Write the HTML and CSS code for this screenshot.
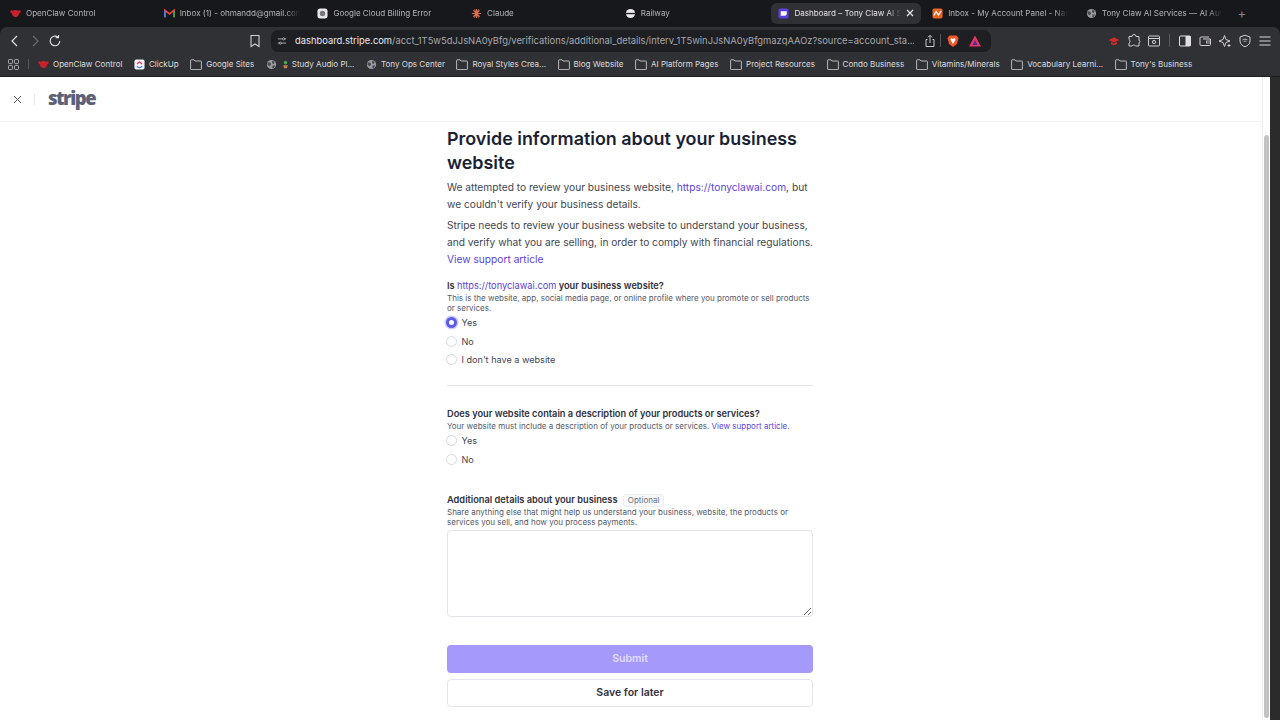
FILE: index.html
```html
<!DOCTYPE html>
<html lang="en">
<head>
    <meta charset="UTF-8">
    <meta name="viewport" content="width=device-width, initial-scale=1.0">
    <title>Dashboard - Tony Claw AI Services</title>
    <link rel="stylesheet" href="styles.css">
</head>
<body>
    <svg class="defs" width="0" height="0">
        <symbol id="folder" viewBox="0 0 12 11"><path d="M.6 2V10a.6.6 0 0 0 .6.6h9.6a.6.6 0 0 0 .6-.6V2.6a.6.6 0 0 0-.6-.6H5L4 .8H1.2A.6.6 0 0 0 .6 1.4Z" fill="none" stroke="#c8c8cc" stroke-width=".9"/></symbol>
        <symbol id="globe" viewBox="0 0 12 12"><circle cx="6" cy="6" r="5" fill="#9a9ba0"/><path d="M2 3.5l3 .5.5 2.5-2 1.5L1.500 6ZM7 1.500l2.500 1.500-1 2.500-2-1ZM7 7h3l-1.500 3H7Z" fill="#4a4b50"/></symbol>
        <symbol id="claw" viewBox="0 0 12 12"><path d="M6 2.200c2.600 0 4 1.500 4 3.500S8 10 6 10 2 7.700 2 5.700 3.400 2.200 6 2.200Z" fill="#c8232c"/><circle cx="1.800" cy="4" r="1.500" fill="#c8232c"/><circle cx="10.200" cy="4" r="1.500" fill="#c8232c"/></symbol>
    </svg>

    <!-- Tab strip -->
    <div class="tabs">
        <div class="tab"><svg class="fav"><use href="#claw"/></svg><span class="tab-title">OpenClaw Control</span></div>
        <div class="tab"><svg class="fav" viewBox="0 0 12 12"><path d="M1 10V2.500L6 6.500 11 2.500V10" fill="none" stroke="#ea4335" stroke-width="1.800"/><path d="M1 10V3" stroke="#4285f4" stroke-width="1.800"/><path d="M11 10V3" stroke="#34a853" stroke-width="1.800"/></svg><span class="tab-title">Inbox (1) - ohmandd@gmail.com</span></div>
        <div class="tab"><svg class="fav" viewBox="0 0 12 12"><rect x=".5" y=".5" width="11" height="11" rx="3" fill="#e8e8ea"/><circle cx="6" cy="6" r="3" fill="#77787c"/></svg><span class="tab-title">Google Cloud Billing Error</span></div>
        <div class="tab"><svg class="fav" viewBox="0 0 12 12"><path d="M6 1v10M1 6h10M2.500 2.500l7 7M9.500 2.500l-7 7M3.800 1.500l4.400 9M8.200 1.500l-4.400 9" stroke="#d9704f" stroke-width="1.100"/></svg><span class="tab-title">Claude</span></div>
        <div class="tab"><svg class="fav" viewBox="0 0 12 12"><circle cx="6" cy="6" r="5" fill="#ececee"/><rect x="1" y="5.300" width="10" height="1.500" fill="#222"/></svg><span class="tab-title">Railway</span></div>
        <div class="tab active"><svg class="fav" viewBox="0 0 12 12"><rect x=".5" y=".5" width="11" height="11" rx="2" fill="#5a3fe0"/><path d="M3 3.500h6.500v3.500L8 8.500H3Z" fill="#fff"/></svg><span class="tab-title">Dashboard – Tony Claw AI Services</span><svg class="tab-close" viewBox="0 0 8 8"><path d="M1 1l6 6M7 1 1 7" stroke="#e6e6e8" stroke-width="1.200"/></svg></div>
        <div class="tab"><svg class="fav" viewBox="0 0 12 12"><rect x=".5" y=".5" width="11" height="11" rx="2" fill="#e8641f"/><path d="M2 8l2.500-4 2.500 3.500L10 3.500" fill="none" stroke="#fff" stroke-width="1.300"/></svg><span class="tab-title">Inbox - My Account Panel - Namecheap</span></div>
        <div class="tab"><svg class="fav"><use href="#globe"/></svg><span class="tab-title">Tony Claw AI Services — AI Automation</span></div>
        <span class="tab-new">+</span>
    </div>

    <!-- Toolbar -->
    <div class="chrome">
        <div class="toolbar">
            <div class="nav-group">
                <svg class="tool" viewBox="0 0 14 14"><path d="M9 2 4 7l5 5" fill="none" stroke="#e4e4e6" stroke-width="1.200"/></svg>
                <svg class="tool" viewBox="0 0 14 14"><path d="M5 2l5 5-5 5" fill="none" stroke="#6a6b70" stroke-width="1.200"/></svg>
                <svg class="tool" viewBox="0 0 14 14"><path d="M11.800 7A4.800 4.800 0 1 1 10 3.200M10.500 1v2.800H7.700" fill="none" stroke="#e4e4e6" stroke-width="1.100"/></svg>
            </div>
            <svg class="tool bookmark" viewBox="0 0 14 14"><path d="M3 1.500h8v11L7 10l-4 2.500Z" fill="none" stroke="#d0d0d4" stroke-width="1.100"/></svg>
            <div class="urlbar">
                <svg class="url-icon" viewBox="0 0 12 12"><path d="M1 3.500h5.500M9.500 3.500H11M1 8.500h1.500M5.500 8.500H11" stroke="#c0c0c4"/><circle cx="8" cy="3.500" r="1.300" fill="none" stroke="#c0c0c4"/><circle cx="4" cy="8.500" r="1.300" fill="none" stroke="#c0c0c4"/></svg>
                <span class="url-text"><b>dashboard.stripe.com</b>/acct_1T5w5dJJsNA0yBfg/verifications/additional_details/interv_1T5winJJsNA0yBfgmazqAAOz?source=account_sta...</span>
                <svg class="tool share" viewBox="0 0 14 14"><path d="M4.500 5.500H3v7h8v-7H9.500M7 9V1.500M5 3.300l2-2 2 2" fill="none" stroke="#c8c8cc" stroke-width="1"/></svg>
                <span class="sep"></span>
                <svg class="tool brave" viewBox="0 0 14 14"><path d="M3.500 1.500h7L12.500 4 11 10l-4 3-4-3L1.500 4Z" fill="#f0562a"/><path d="M7 5 5 4 4.500 6 7 10l2.500-4L9 4Z" fill="#fff"/></svg>
                <svg class="tool rewards" viewBox="0 0 14 14"><path d="M7 1.500 13 12.500H1Z" fill="#e8345c"/><path d="M7 6l2.500 5h-5Z" fill="#4b2fa8"/></svg>
            </div>
            <div class="ext-group">
                <svg class="tool" viewBox="0 0 14 14"><path d="M1.500 6 7 3.500 12.500 6 7 8.500Z" fill="#d42a2a"/><path d="M4 8v2c2 1.500 4 1.500 6 0V8L7 9.500Z" fill="#d42a2a"/></svg>
                <svg class="tool" viewBox="0 0 14 14"><path d="M5 2.500a2 2 0 0 1 4 0H12V6a2 2 0 0 1 0 3v3H8.500a2 2 0 0 0-3.500 0H2V9a2 2 0 0 0 0-3.500V2.500Z" fill="none" stroke="#d0d0d4" stroke-width="1"/></svg>
                <svg class="tool" viewBox="0 0 14 14"><rect x="1.500" y="2" width="11" height="10" rx="1" fill="none" stroke="#d0d0d4"/><path d="M1.500 4.500h11" stroke="#d0d0d4"/><circle cx="7" cy="8" r="1.600" fill="none" stroke="#d0d0d4"/></svg>
                <span class="sep"></span>
                <svg class="tool" viewBox="0 0 14 14"><rect x="1.500" y="2" width="11" height="10" rx="1" fill="none" stroke="#e0e0e4"/><rect x="7.500" y="2" width="5" height="10" fill="#e0e0e4"/></svg>
                <svg class="tool" viewBox="0 0 14 14"><path d="M11 3H3a1 1 0 0 0-1 1v6.500a1 1 0 0 0 1 1h8.500a1 1 0 0 0 1-1V5H5" fill="none" stroke="#d0d0d4"/><rect x="8.500" y="7" width="4" height="2" fill="none" stroke="#d0d0d4" stroke-width=".8"/></svg>
                <svg class="tool" viewBox="0 0 14 14"><path d="M6.500 1.500 8 5.500l4 1.500-4 1.500-1.500 4L5 8.500 1 7l4-1.500Z" fill="none" stroke="#d0d0d4"/><path d="M11 10v3M9.500 11.500h3" stroke="#d0d0d4"/></svg>
                <svg class="tool" viewBox="0 0 14 14"><path d="M7 1.200 12 3v4c0 3-2.500 5-5 5.800C4.500 12 2 10 2 7V3Z" fill="none" stroke="#d0d0d4"/><path d="M4.500 6c1.500-1.200 3.500-1.200 5 0M5.700 7.600c.8-.6 1.800-.6 2.600 0" fill="none" stroke="#d0d0d4" stroke-width=".9"/></svg>
                <svg class="tool" viewBox="0 0 14 14"><path d="M1.500 3h11M1.500 7h11M1.500 11h11" stroke="#d8d8dc" stroke-width="1.100"/></svg>
            </div>
        </div>

        <!-- Bookmarks -->
        <div class="bookmarks">
            <svg class="apps" viewBox="0 0 12 12"><g fill="none" stroke="#c8c8cc" stroke-width=".9"><rect x=".5" y=".5" width="4.500" height="4.500" rx="1.300"/><rect x="7" y=".5" width="4.500" height="4.500" rx="1.300"/><rect x=".5" y="7" width="4.500" height="4.500" rx="1.300"/><rect x="7" y="7" width="4.500" height="4.500" rx="1.300"/></g></svg>
            <span class="sep"></span>
            <a class="mark"><svg class="fav"><use href="#claw"/></svg>OpenClaw Control</a>
            <a class="mark"><svg class="fav" viewBox="0 0 12 12"><rect x=".5" y=".5" width="11" height="11" rx="2" fill="#f2f2f4"/><path d="M3 8c2 1.800 4 1.800 6 0" fill="none" stroke="#3a7cf0" stroke-width="1.300"/><path d="M3.300 5.500 6 3l2.700 2.500" fill="none" stroke="#e8345c" stroke-width="1.300"/></svg>ClickUp</a>
            <a class="mark"><svg class="fav folder"><use href="#folder"/></svg>Google Sites</a>
            <a class="mark"><svg class="fav"><use href="#globe"/></svg><svg class="fav plant" viewBox="0 0 12 12"><path d="M6 1C3 2 3 5 6 6 9 5 9 2 6 1Z" fill="#4aa84a"/><path d="M3 7h6l-1 4H4Z" fill="#c08050"/></svg>Study Audio Pl...</a>
            <a class="mark"><svg class="fav"><use href="#globe"/></svg>Tony Ops Center</a>
            <a class="mark"><svg class="fav folder"><use href="#folder"/></svg>Royal Styles Crea...</a>
            <a class="mark"><svg class="fav folder"><use href="#folder"/></svg>Blog Website</a>
            <a class="mark"><svg class="fav folder"><use href="#folder"/></svg>AI Platform Pages</a>
            <a class="mark"><svg class="fav folder"><use href="#folder"/></svg>Project Resources</a>
            <a class="mark"><svg class="fav folder"><use href="#folder"/></svg>Condo Business</a>
            <a class="mark"><svg class="fav folder"><use href="#folder"/></svg>Vitamins/Minerals</a>
            <a class="mark"><svg class="fav folder"><use href="#folder"/></svg>Vocabulary Learni...</a>
            <a class="mark"><svg class="fav folder"><use href="#folder"/></svg>Tony's Business</a>
        </div>
    </div>

    <!-- Page -->
    <div class="viewport">
        <div class="page">
            <div class="page-head">
                <svg class="close" viewBox="0 0 9 9"><path d="M1 1l7 7M8 1 1 8" stroke="#4f5566" stroke-width="1"/></svg>
                <span class="head-sep"></span>
                <span class="logo">stripe</span>
            </div>

            <div class="form-wrap">
                <h1>Provide information about your business website</h1>
                <p class="intro">We attempted to review your business website, <a href="#">https://tonyclawai.com</a>, but we couldn't verify your business details.</p>
                <p class="intro second">Stripe needs to review your business website to understand your business, and verify what you are selling, in order to comply with financial regulations. <a href="#">View support article</a></p>

                <div class="field first">
                    <div class="label">Is <a href="#">https://tonyclawai.com</a> your business website?</div>
                    <div class="help">This is the website, app, social media page, or online profile where you promote or sell products or services.</div>
                    <label class="radio"><input type="radio" name="own" checked>Yes</label>
                    <label class="radio"><input type="radio" name="own">No</label>
                    <label class="radio"><input type="radio" name="own">I don't have a website</label>
                </div>

                <hr>

                <div class="field">
                    <div class="label">Does your website contain a description of your products or services?</div>
                    <div class="help">Your website must include a description of your products or services. <a href="#">View support article.</a></div>
                    <label class="radio"><input type="radio" name="desc">Yes</label>
                    <label class="radio"><input type="radio" name="desc">No</label>
                </div>

                <div class="field details">
                    <div class="label">Additional details about your business <span class="badge">Optional</span></div>
                    <div class="help">Share anything else that might help us understand your business, website, the products or services you sell, and how you process payments.</div>
                    <textarea></textarea>
                </div>

                <button class="btn primary">Submit</button>
                <button class="btn secondary">Save for later</button>
            </div>
        </div>
        <div class="scrollbar"><div class="thumb"></div></div>
    </div>
</body>
</html>
```

FILE: styles.css
```css
/* General */
* {
    box-sizing: border-box;
}
html, body {
    height: 720px;
    overflow: hidden;
}
body {
    margin: 0;
    font-family: Inter, "Liberation Sans", sans-serif;
    background-color: #17181c;
    display: flex;
    flex-direction: column;
}
.defs {
    position: absolute;
}
a {
    color: #5b3fdc;
    text-decoration: none;
}
.sep {
    width: 1px;
    height: 13px;
    background-color: #55565b;
    flex: none;
}

/* Tab strip */
.tabs {
    height: 27px;
    flex: none;
    display: flex;
    align-items: center;
    gap: 3.7px;
    padding: 0 0 1px 3px;
    background-color: #17181c;
}
.tab {
    width: 150px;
    height: 21px;
    padding: 0 7px;
    display: flex;
    align-items: center;
    gap: 5px;
    flex: none;
    color: #b4b5b9;
    font-size: 8.05px;
    border-radius: 6px;
}
.tab.active {
    background-color: #303135;
    color: #e6e6e8;
}
.fav {
    width: 11px;
    height: 11px;
    flex: none;
}
.fav.folder {
    width: 12px;
}
.fav.plant {
    width: 9px;
    margin-right: -2px;
}
.tab-title {
    flex: 1;
    min-width: 0;
    white-space: nowrap;
    overflow: hidden;
    -webkit-mask-image: linear-gradient(to left, transparent 0, #000 14px);
    mask-image: linear-gradient(to left, transparent 0, #000 14px);
}
.tab-close {
    width: 8px;
    height: 8px;
    flex: none;
}
.tab-new {
    margin-left: 5px;
    color: #85868a;
    font-size: 13px;
}

/* Toolbar */
.chrome {
    flex: none;
    background-color: #303135;
    border-radius: 7px 7px 0 0;
    border-bottom: 1px solid #1c1c1e;
}
.toolbar {
    height: 27px;
    display: flex;
    align-items: center;
    padding: 0 8px;
}
.tool {
    width: 14px;
    height: 14px;
    flex: none;
}
.nav-group {
    display: flex;
    gap: 6px;
    width: 240px;
    align-items: center;
}
.bookmark {
    margin-right: 9px;
}
.urlbar {
    width: 720px;
    height: 22px;
    display: flex;
    align-items: center;
    padding: 0 6px;
    background-color: #1e1f23;
    border-radius: 7px;
}
.url-icon {
    width: 10px;
    height: 10px;
    margin-right: 8px;
    flex: none;
}
.url-text {
    width: 619px;
    flex: none;
    white-space: nowrap;
    overflow: hidden;
    color: #a6a7ab;
    font-size: 9.4px;
}
.url-text b {
    color: #e8e8ea;
    font-weight: 400;
}
.share {
    margin-left: 9px;
}
.urlbar .sep {
    margin: 0 5px 0 3px;
}
.rewards {
    margin-left: 8px;
}
.ext-group {
    margin-left: 116px;
    display: flex;
    align-items: center;
    gap: 6px;
}
.ext-group .sep {
    margin: 0 2px;
}

/* Bookmarks */
.bookmarks {
    height: 22px;
    display: flex;
    align-items: center;
    padding: 0 0 2px 8px;
    color: #dcdcde;
    font-size: 8.05px;
}
.apps {
    width: 11px;
    height: 11px;
    flex: none;
}
.bookmarks .sep {
    height: 10px;
    margin: 0 9px;
}
.mark {
    display: flex;
    align-items: center;
    gap: 4px;
    margin-right: 11.5px;
    color: #dcdcde;
    white-space: nowrap;
}

/* Page */
.viewport {
    flex: 1;
    min-height: 0;
    display: flex;
    background-color: #2b2b2c;
    padding-right: 10px;
}
.page {
    flex: 1;
    min-width: 0;
    background-color: #fff;
    overflow: hidden;
}
.page-head {
    height: 45px;
    display: flex;
    align-items: center;
    padding-left: 13px;
    border-bottom: 1px solid #f0f1f4;
}
.close {
    width: 9px;
    height: 9px;
    flex: none;
}
.head-sep {
    width: 1px;
    height: 11px;
    margin: 0 13px 0 12px;
    background-color: #e3e5ea;
}
.logo {
    margin-bottom: 4px;
    color: #5c6078;
    font-family: "Open Sans", sans-serif;
    font-size: 18.5px;
    font-weight: 800;
    letter-spacing: -1.5px;
}
.form-wrap {
    width: 366px;
    margin-left: 447px;
}
h1 {
    margin: 5px 0 0;
    color: #1a1f36;
    font-size: 17.9px;
    line-height: 24px;
    font-weight: 600;
}
.intro {
    margin: 4px 0 0;
    color: #414552;
    font-size: 10.2px;
    line-height: 17px;
}
.intro.second {
    margin-top: 4px;
}
.field {
    margin-top: 21px;
}
.field.first {
    margin-top: 10.5px;
}
.field.details {
    margin-top: 24px;
}
.label {
    height: 14px;
    color: #30313d;
    font-size: 9.25px;
    line-height: 14px;
    font-weight: 600;
}
.label a {
    font-weight: 400;
}
.help {
    color: #545969;
    font-size: 8px;
    line-height: 10.5px;
}
.radio {
    display: flex;
    align-items: center;
    gap: 4.5px;
    height: 18.5px;
    color: #414552;
    font-size: 9.1px;
}
input[type="radio"] {
    appearance: none;
    width: 11px;
    height: 11px;
    margin: 0 0 0 -1px;
    flex: none;
    background-color: #fff;
    border: 1px solid #d5d9e0;
    border-radius: 50%;
}
input[type="radio"]:checked {
    border: 3.5px solid #5b5ce8;
    box-shadow: 0 0 0 1.5px rgba(91, 92, 232, .3);
}
hr {
    margin: 16px 0 0;
    border: none;
    border-top: 1px solid #e3e5ea;
}
.badge {
    display: inline-block;
    margin-left: 3px;
    padding: 0 4px;
    color: #6a7383;
    font-size: 8px;
    font-weight: 400;
    line-height: 11px;
    vertical-align: 0;
    background-color: #f6f8fa;
    border: 1px solid #ebeef1;
    border-radius: 3px;
}
textarea {
    display: block;
    width: 100%;
    height: 87px;
    margin-top: 2px;
    background-color: #fff;
    border: 1px solid #e3e5ea;
    border-radius: 4px;
}
.btn {
    display: block;
    width: 100%;
    font-family: inherit;
    font-size: 10.5px;
    font-weight: 600;
    border-radius: 4px;
}
.primary {
    height: 28px;
    margin-top: 28px;
    color: #e0dcff;
    background-color: #a599fc;
    border: none;
}
.secondary {
    height: 28px;
    margin-top: 6px;
    color: #30313d;
    background-color: #fff;
    border: 1px solid #e3e5ea;
}

/* Scrollbar */
.scrollbar {
    width: 8px;
    flex: none;
    background-color: #fff;
    border-left: 1px solid #eee;
    padding: 58px 1px 2px 1px;
}
.thumb {
    height: 100%;
    background-color: #c2c2c2;
    border-radius: 3px;
}
```
